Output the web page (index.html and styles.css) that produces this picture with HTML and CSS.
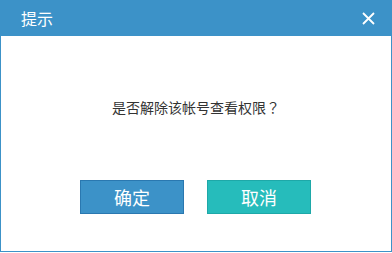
FILE: index.html
```html
<!DOCTYPE html>
<html lang="zh-CN">
<head>
    <meta charset="UTF-8">
    <meta name="viewport" content="width=device-width, initial-scale=1.0">
    <title>提示</title>
    <link rel="stylesheet" href="styles.css">
</head>
<body>
    <div class="dialog">
        <div class="dialog-header">
            <span class="dialog-title">提示</span>
            <span class="dialog-close">
                <svg width="13" height="13" viewBox="0 0 13 13">
                    <path d="M1 1 L12 12 M12 1 L1 12" stroke="#fff" stroke-width="1.8" fill="none"/>
                </svg>
            </span>
        </div>
        <div class="dialog-body">
            <p class="dialog-message">是否解除该帐号查看权限<span class="punct" lang="zh-TW">？</span></p>
            <div class="dialog-buttons">
                <button class="btn btn-confirm">确定</button>
                <button class="btn btn-cancel">取消</button>
            </div>
        </div>
    </div>
</body>
</html>
```

FILE: styles.css
```css
body {
    margin: 0;
    font-family: "Noto Sans CJK SC", "Noto Sans", sans-serif;
    background-color: #fff;
}
.dialog {
    width: 392px;
    height: 252px;
    box-sizing: border-box;
    border: 1px solid #3c92c8;
    border-top: none;
    box-shadow: 0 1px 0 #7a7a7a;
    background: #fff;
}
.dialog-header {
    height: 36px;
    margin: 0 -1px;
    background-color: #3c92c8;
    display: flex;
    align-items: center;
    justify-content: space-between;
    padding: 0 17px 0 21px;
    color: #fff;
}
.dialog-title {
    font-size: 16px;
    line-height: 16px;
}
.dialog-close {
    display: flex;
    width: 13px;
    height: 13px;
}
.dialog-body {
    padding-top: 61px;
}
.dialog-message {
    margin: 0;
    text-align: center;
    font-size: 14px;
    line-height: 20px;
    color: #333;
}
.punct {
    font-family: "Noto Sans CJK TC", sans-serif;
}
.dialog-buttons {
    margin-top: 63px;
    display: flex;
    gap: 23px;
    padding-left: 79px;
}
.btn {
    width: 104px;
    height: 34px;
    box-sizing: border-box;
    font-family: inherit;
    font-size: 18px;
    color: #fff;
    padding: 0;
    cursor: pointer;
}
.btn-confirm {
    background-color: #3c92c8;
    border: 1px solid #2a78b0;
}
.btn-cancel {
    background-color: #26bcbb;
    border: 1px solid #1ea8a8;
}
```
